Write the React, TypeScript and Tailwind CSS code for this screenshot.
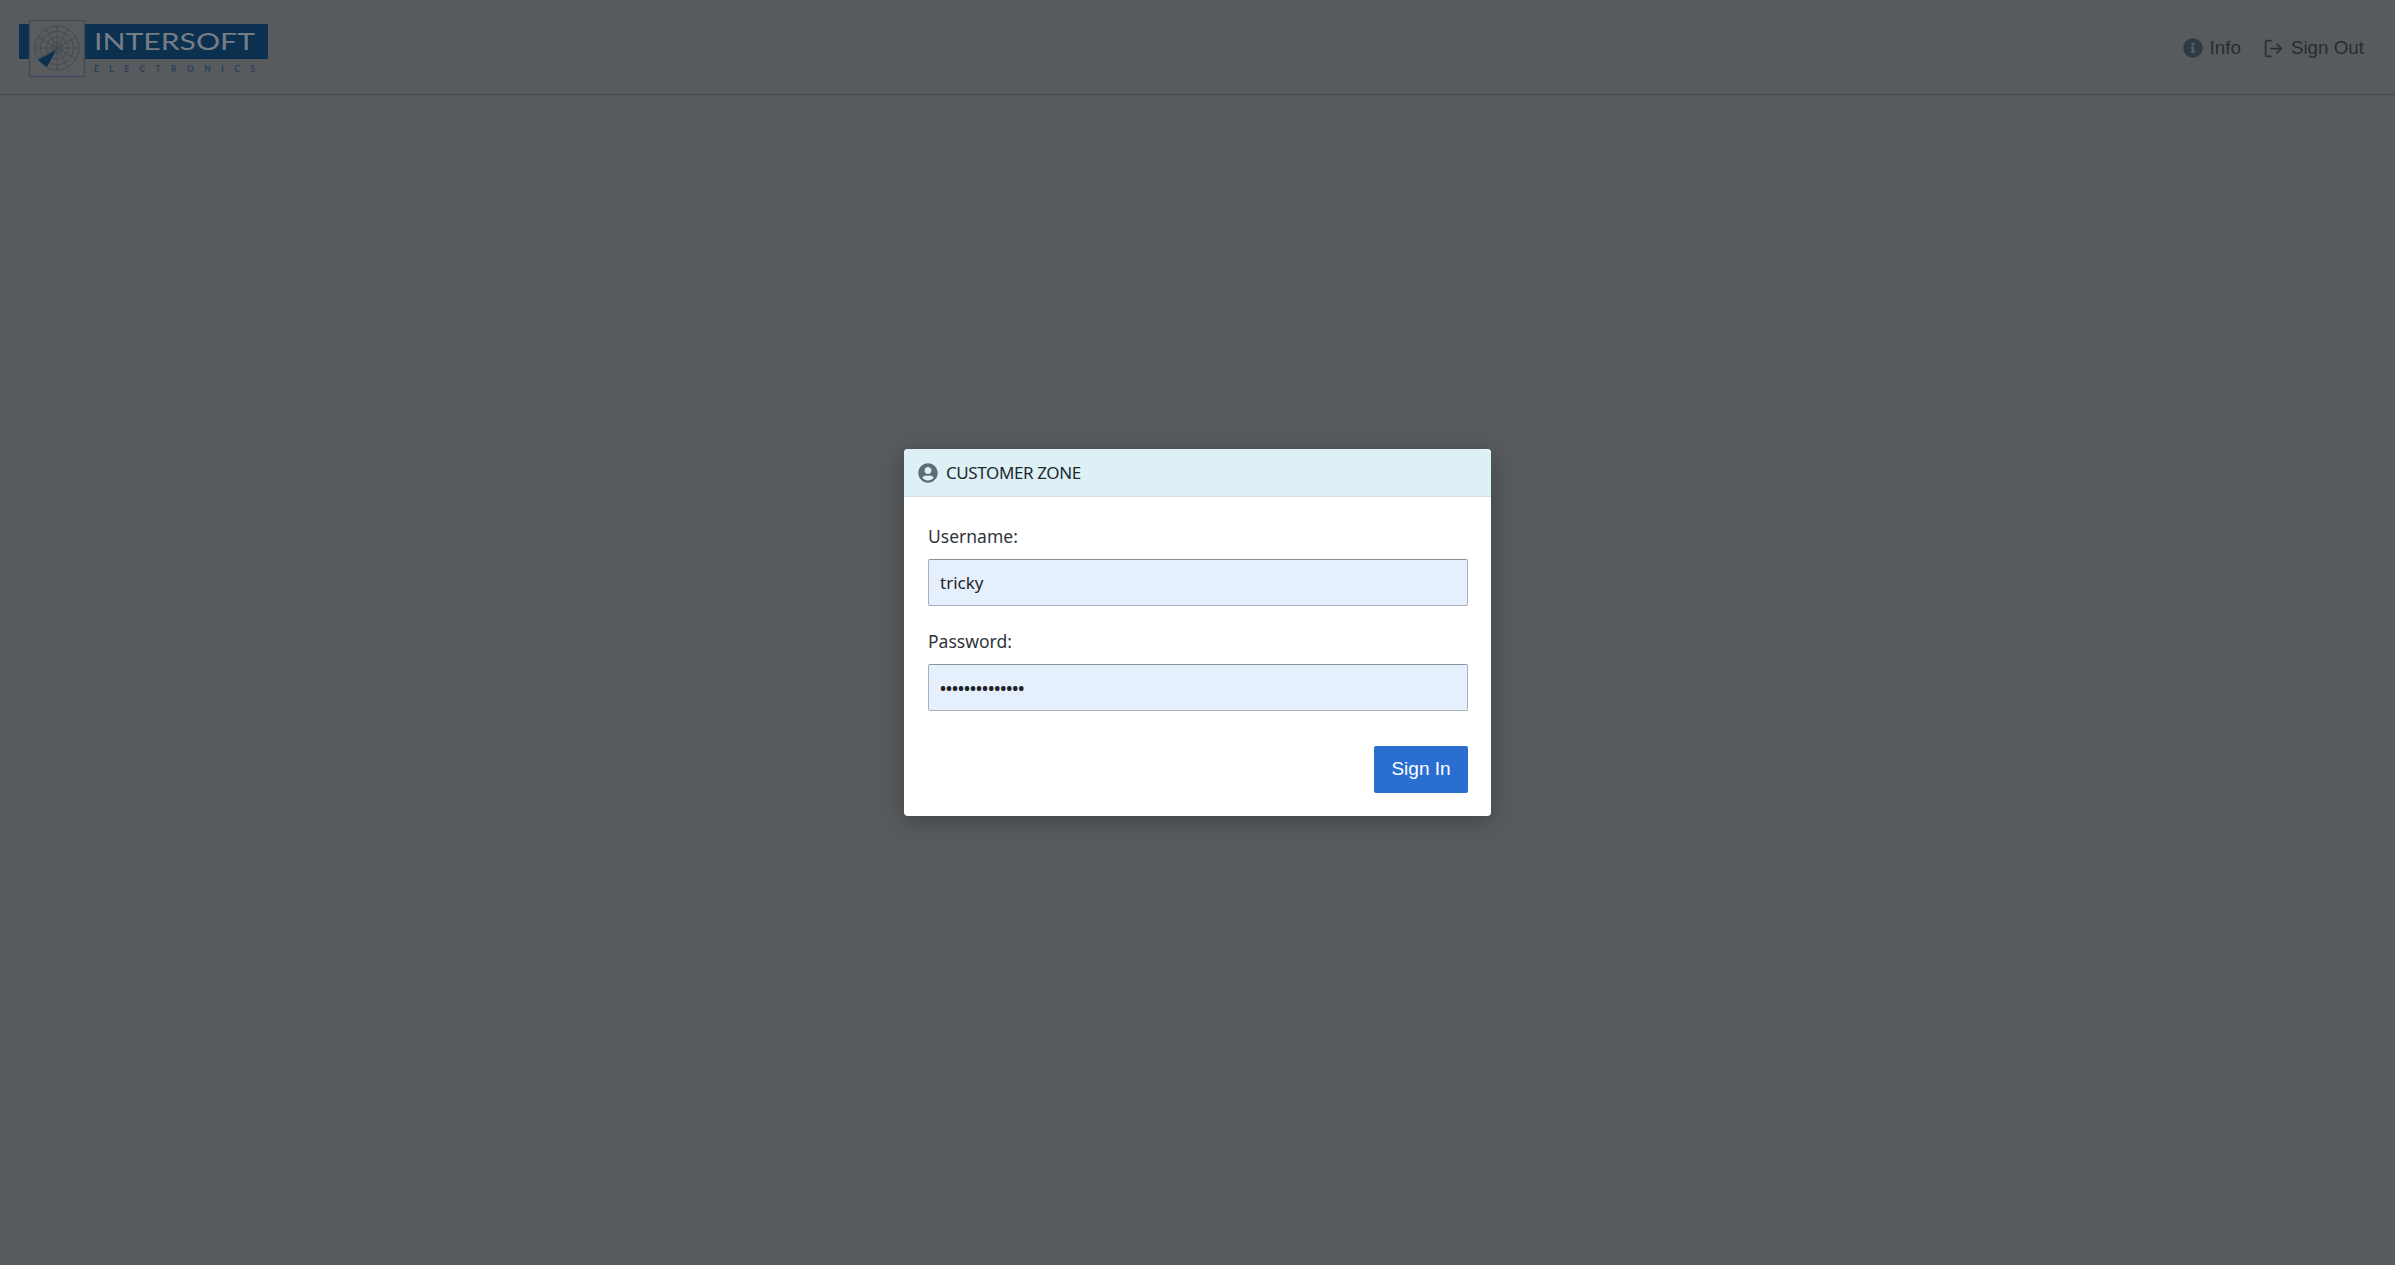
import { LogOut } from "lucide-react";
import { FaInfoCircle, FaUserCircle } from "react-icons/fa";

function Logo() {
  const spokes = [0, 30, 60, 90, 120, 150];
  return (
    <svg width="250" height="58" viewBox="0 0 250 58" className="mt-[2px] block">
      <rect x="0" y="4" width="249" height="35" fill="#0c3050" />
      <rect x="10.5" y="0.5" width="55" height="56" fill="#585c5f" stroke="#3f4a58" strokeWidth="1.4" />
      <g fill="none" stroke="#3f464d" strokeWidth="0.8">
        <circle cx="38" cy="28" r="22" />
        <circle cx="38" cy="28" r="16.5" />
        <circle cx="38" cy="28" r="11" />
        <circle cx="38" cy="28" r="5.5" />
        {spokes.map((a) => (
          <line key={a} x1="16" y1="28" x2="60" y2="28" transform={`rotate(${a} 38 28)`} />
        ))}
      </g>
      <path d="M37 30 L19 40 L28 47 Z" fill="#0c3050" />
      <text x="75" y="30" fill="#767d85" fontFamily="Lato, sans-serif" fontSize="23.5" textLength="161" lengthAdjust="spacingAndGlyphs">
        INTERSOFT
      </text>
      <text x="75" y="52" fill="#2c3f55" fontFamily="Lato, sans-serif" fontWeight="700" fontSize="8.5" textLength="161" lengthAdjust="spacing">
        ELECTRONICS
      </text>
    </svg>
  );
}

function Field({ label, type, value }: { label: string; type: string; value: string }) {
  return (
    <div className="flex flex-col">
      <label className="mb-[10px] text-[17.5px] leading-[25px] text-[#2f353b]">{label}</label>
      <input
        type={type}
        defaultValue={value}
        readOnly
        className={`h-[47px] w-full rounded-[2px] border border-[#a9b0ba] border-t-[#8a929c] bg-[#e6effc] px-[11px] text-[#1f2429] outline-none ${
          type === "password" ? "text-[16px] font-bold" : "text-[17px]"
        }`}
      />
    </div>
  );
}

export default function App() {
  return (
    <div className="relative h-[1265px] w-full overflow-hidden bg-[#575b5e] font-['Liberation_Sans',sans-serif]">
      <header className="flex h-[95px] items-center justify-between border-b border-[#45494c] pt-[2px] pl-[19px] pr-[31px]">
        <Logo />
        <nav className="flex items-center gap-[22px] text-[18.8px] text-[#272b30]">
          <a className="flex items-center gap-[7px]">
            <FaInfoCircle className="text-[20px] text-[#2f3a48]" />
            Info
          </a>
          <a className="flex items-center gap-[7px]">
            <LogOut size={21} strokeWidth={2} className="text-[#2a3038]" />
            Sign Out
          </a>
        </nav>
      </header>

      <div className="absolute inset-0 flex items-center justify-center">
        <div className="w-[587px] overflow-hidden rounded-[4px] bg-white font-['Noto_Sans',sans-serif] shadow-[0_5px_24px_rgba(0,0,0,0.25)]">
          <div className="flex h-[48px] items-center gap-[8px] border-b border-[#d3dfe3] bg-[#dcf0f5] px-[14px] text-[17px] tracking-[-0.4px] text-[#23282d]">
            <FaUserCircle className="text-[20px] text-[#5f6b78]" />
            CUSTOMER ZONE
          </div>
          <form className="flex flex-col gap-[23px] pl-[24px] pr-[23px] pt-[27px] pb-[23px]">
            <Field label="Username:" type="text" value="tricky" />
            <Field label="Password:" type="password" value="tricky-secret1" />
            <div className="mt-[12px] flex justify-end">
              <button
                type="button"
                className="h-[47px] w-[94px] rounded-[2px] bg-[#2b6ed2] font-['Liberation_Sans',sans-serif] text-[19px] text-white"
              >
                Sign In
              </button>
            </div>
          </form>
        </div>
      </div>
    </div>
  );
}
